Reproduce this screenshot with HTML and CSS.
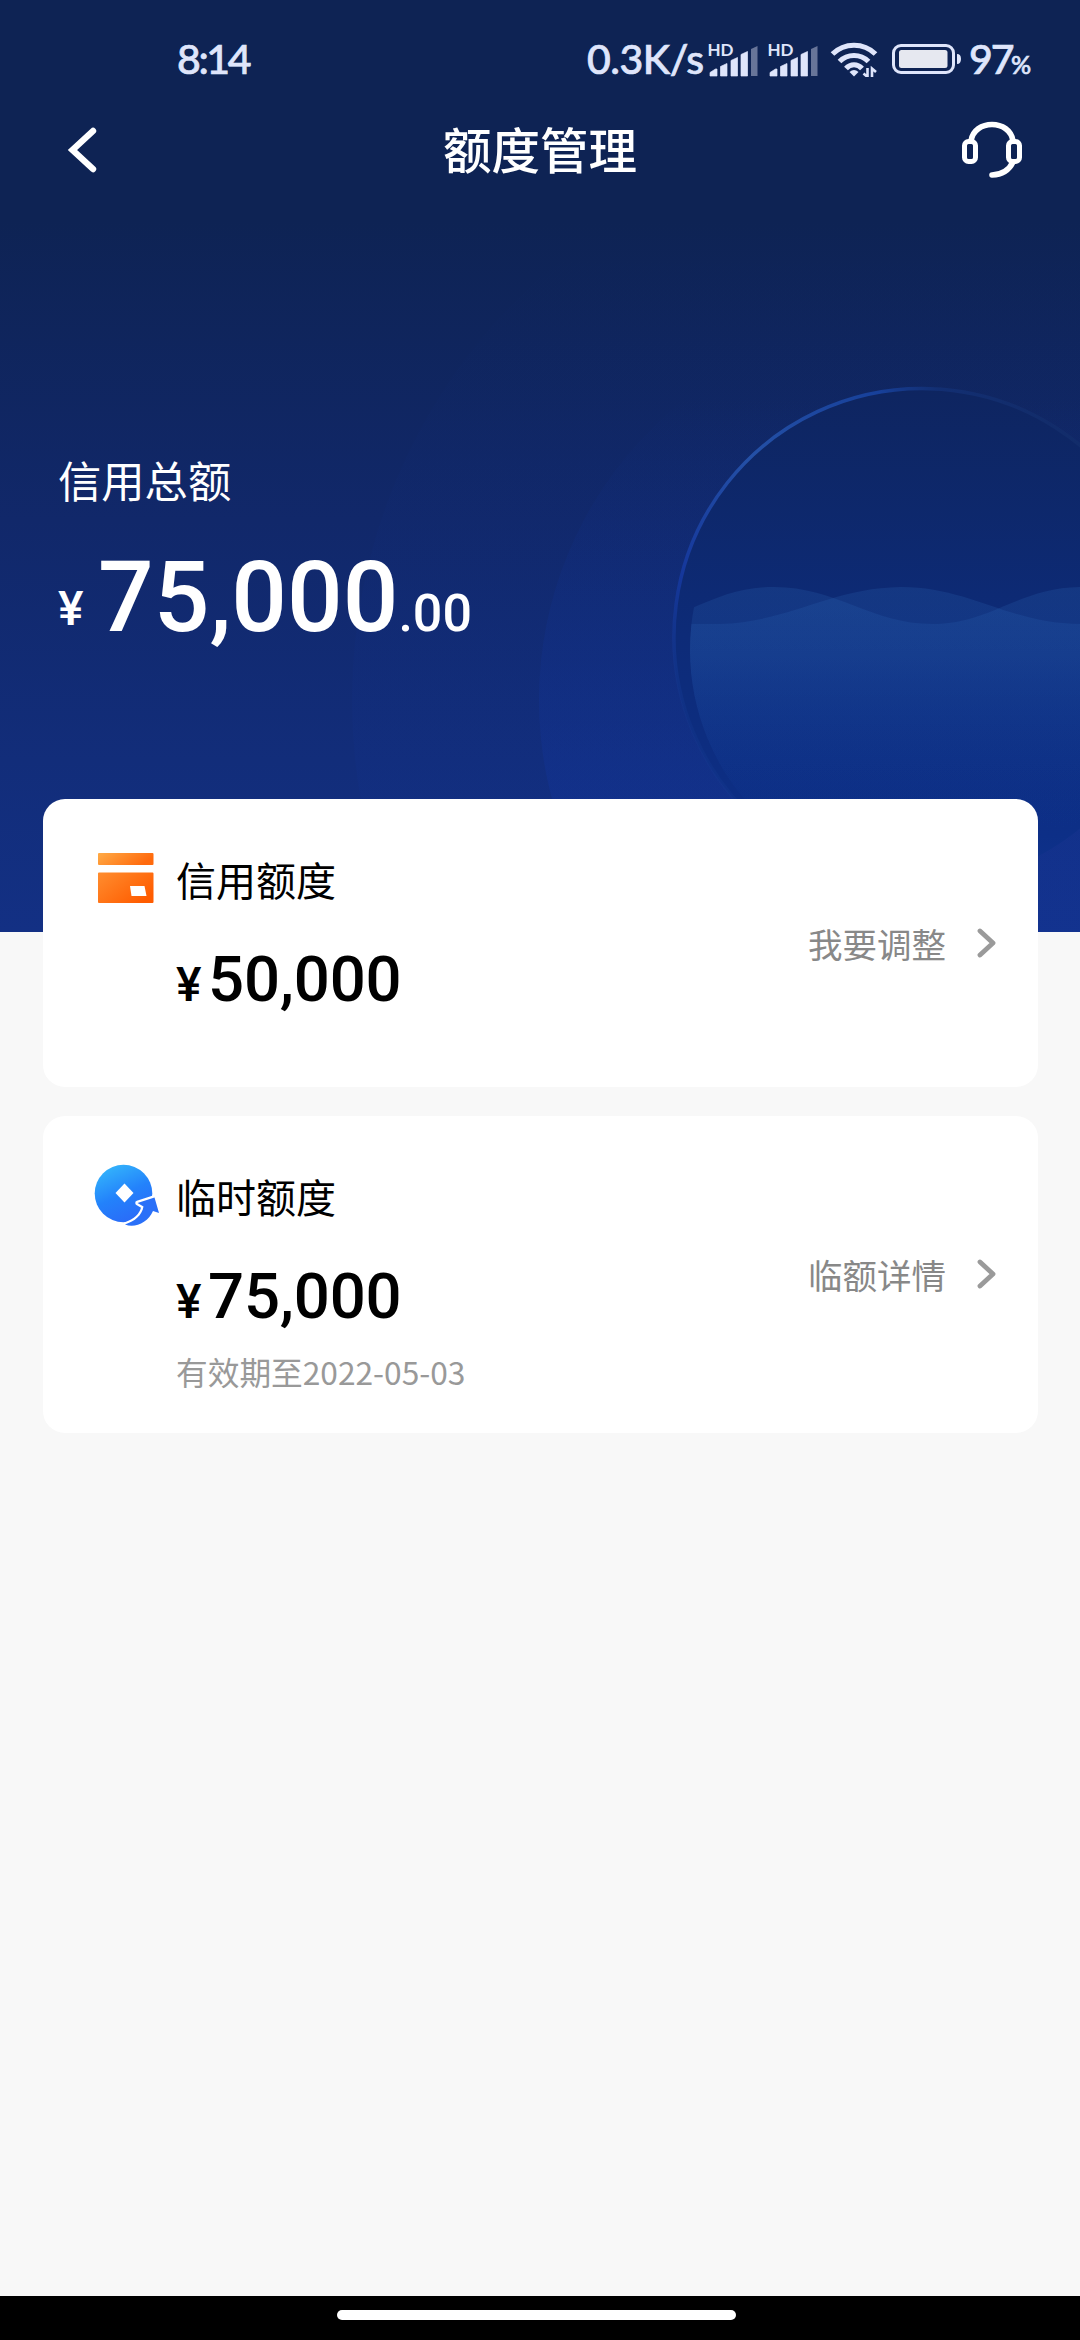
FILE: index.html
```html
<!DOCTYPE html>
<html lang="zh-CN">
<head>
<meta charset="utf-8">
<title>额度管理</title>
<link rel="stylesheet" href="styles.css">
</head>
<body>
<div class="screen">
  <header class="hero">
    <svg class="hero-art" width="1080" height="932" viewBox="0 0 1080 932">
      <defs>
        <linearGradient id="halo" x1="0" y1="0" x2="0" y2="1">
          <stop offset="0.1" stop-color="#1238a8" stop-opacity="0"/>
          <stop offset="0.6" stop-color="#1238a8" stop-opacity="0.24"/>
        </linearGradient>
        <linearGradient id="orb" x1="0" y1="0" x2="0" y2="1">
          <stop offset="0" stop-color="#0e2560"/>
          <stop offset="0.5" stop-color="#0d2b78"/>
          <stop offset="0.9" stop-color="#0d2f87"/>
          <stop offset="1" stop-color="#0f338c"/>
        </linearGradient>
        <linearGradient id="rim" gradientUnits="userSpaceOnUse" x1="673" y1="700" x2="1040" y2="400">
          <stop offset="0" stop-color="#153a92" stop-opacity="0.3"/>
          <stop offset="0.18" stop-color="#15379b"/>
          <stop offset="0.45" stop-color="#2450a6"/>
          <stop offset="0.75" stop-color="#17409a"/>
          <stop offset="0.85" stop-color="#15357e" stop-opacity="0.6"/>
          <stop offset="1" stop-color="#15306e" stop-opacity="0.6"/>
        </linearGradient>
        <linearGradient id="water" gradientUnits="userSpaceOnUse" x1="0" y1="587" x2="0" y2="830">
          <stop offset="0" stop-color="#2c66b4" stop-opacity="0.23"/>
          <stop offset="0.25" stop-color="#2860b4" stop-opacity="0.2"/>
          <stop offset="1" stop-color="#103ca4" stop-opacity="0"/>
        </linearGradient>
        <clipPath id="bowl"><circle cx="922" cy="650" r="232"/></clipPath>
      </defs>
      <circle cx="922" cy="700" r="570" fill="url(#halo)" opacity="0.35"/>
      <circle cx="922" cy="700" r="383" fill="url(#halo)"/>
      <circle cx="922" cy="636" r="249" fill="url(#orb)"/>
      <path d="M762 826A248 248 0 1 1 1170 636" fill="none" stroke="url(#rim)" stroke-width="3.500"/>
      <g clip-path="url(#bowl)">
        <path d="M690 624H720C790 622 830 588 901 587C970 587 1010 624 1080 624V932H690Z" fill="url(#water)"/>
        <path d="M690 609C720 596 742 587 774 587C836 587 872 624 932 624C990 624 1018 588 1080 587V932H690Z" fill="url(#water)"/>
      </g>
    </svg>

    <div class="status">
      <span class="time">8:14</span>
      <span class="speed">0.3K/s</span>
      <svg class="signal" width="60" height="36" viewBox="0 0 60 36">
        <path d="M2 35L2 31.500L7.500 28H9V35ZM12.500 35V25.500L19 22.500V35ZM23 35V19.500L29.500 16.500V35ZM33 35V13.500L39.500 10.500V35Z" fill="#dfe5fb" stroke="#dfe5fb" stroke-width="0.700" stroke-linejoin="round"/>
        <path d="M43 35V8L49.500 5V35Z" fill="#687599"/>
        <text class="hd" x="-0.500" y="15">HD</text>
      </svg>
      <svg class="signal" width="60" height="36" viewBox="0 0 60 36">
        <path d="M2 35L2 31.500L7.500 28H9V35ZM12.500 35V25.500L19 22.500V35ZM23 35V19.500L29.500 16.500V35ZM33 35V13.500L39.500 10.500V35Z" fill="#dfe5fb" stroke="#dfe5fb" stroke-width="0.700" stroke-linejoin="round"/>
        <path d="M43 35V8L49.500 5V35Z" fill="#687599"/>
        <text class="hd" x="-0.500" y="15">HD</text>
      </svg>
      <svg class="wifi" width="48" height="36" viewBox="0 0 48 36">
        <g fill="none" stroke="#dfe5fb" stroke-width="5.200">
          <path d="M2.500 13C14.500 1.300 33.500 1.300 45.500 13"/>
          <path d="M9.500 20.500C17.500 12.500 30.500 12.500 38.500 20.500"/>
          <path d="M16 27.500C20.500 22.500 27.500 22.500 32 27.500"/>
        </g>
        <path d="M19.500 31Q24 27 28.500 31L24 35.500Z" fill="#dfe5fb"/>
        <path d="M37.500 27V36L33.500 32.500M42 36V27.500L46 31" fill="none" stroke="#dfe5fb" stroke-width="2.600"/>
      </svg>
      <svg class="battery" width="72" height="32" viewBox="0 0 72 32">
        <rect x="2.500" y="2.500" width="60" height="27" rx="7.500" fill="none" stroke="#dfe5fb" stroke-width="3"/>
        <rect x="8" y="7" width="48.500" height="18" rx="2.500" fill="#e6e8f0"/>
        <path d="M66 11q4 0 4 5t-4 5Z" fill="#dfe5fb"/>
      </svg>
      <span class="level">97</span><span class="percent">%</span>
    </div>

    <nav class="nav">
      <svg width="64" height="48" viewBox="0 0 64 48"><path d="M29 5L8.500 24L29 43" fill="none" stroke="#fff" stroke-width="6.400" stroke-linecap="round" stroke-linejoin="miter"/></svg>
      <h1 class="nav-title">额度管理</h1>
      <svg width="64" height="60" viewBox="0 0 64 60">
        <g fill="none" stroke="#fff" stroke-width="5" stroke-linecap="round">
          <rect x="4.500" y="21.500" width="11" height="20" rx="4"/>
          <rect x="48.500" y="21.500" width="11" height="20" rx="4"/>
          <path d="M11 21C14 -1 50 -1 53 21M53 42Q47 54.500 32 55" stroke-width="5.600"/>
        </g>
      </svg>
    </nav>

    <section class="total">
      <div class="total-label">信用总额</div>
      <div class="total-value"><span class="total-yen">¥</span><span class="total-int">75,000</span><span class="total-dec">.00</span></div>
    </section>
  </header>

  <main class="cards">
    <article class="card">
      <svg class="card-icon" width="66" height="66" viewBox="0 0 66 66">
        <defs>
          <linearGradient id="orangeTop" x1="0" y1="0" x2="1" y2="0.300"><stop stop-color="#ffab46"/><stop offset="1" stop-color="#ff6a0d"/></linearGradient>
          <linearGradient id="orange" x1="0" y1="0" x2="1" y2="0.700"><stop stop-color="#ff8d2f"/><stop offset="1" stop-color="#ff5c00"/></linearGradient>
        </defs>
        <rect x="5" y="9" width="55.500" height="12" rx="1" fill="url(#orangeTop)"/>
        <path d="M6 28.500H59.500Q60.500 28.500 60.500 29.500V58Q60.500 59 59.500 59H6Q5 59 5 58V29.500Q5 28.500 6 28.500ZM37 42L38.500 52H53.500L51.500 42Z" fill="url(#orange)" fill-rule="evenodd"/>
      </svg>
      <div class="card-body">
        <h2 class="card-title">信用额度</h2>
        <div class="amount"><span class="yen">¥</span><span class="num">50,000</span></div>
      </div>
      <a class="card-link">我要调整<svg class="chevron" width="20" height="32" viewBox="0 0 20 32"><path d="M3 4L16 16L3 28" fill="none" stroke="#9a9a9a" stroke-width="4.800" stroke-linecap="round" stroke-linejoin="round"/></svg></a>
    </article>

    <article class="card card-temp">
      <svg class="card-icon" width="68" height="68" viewBox="0 0 68 68">
        <defs>
          <linearGradient id="blue" x1="0.150" y1="0" x2="0.600" y2="1"><stop stop-color="#35b9fb"/><stop offset="0.550" stop-color="#2382fb"/><stop offset="1" stop-color="#2a6bf8"/></linearGradient>
        </defs>
        <circle cx="31.500" cy="32.500" r="28.800" fill="url(#blue)"/>
        <path fill="#fff" d="M32.500 22.500L41.500 32L32.500 41.500L23.500 32Z"/>
        <path fill="#2a70f8" stroke="#fff" stroke-width="4.500" paint-order="stroke" stroke-linejoin="round" d="M62.500 36.500L45.500 42L51.500 45.500C50 54.500 43 60 33 63.500C43 67.500 56 61.500 61 50L67 52Z"/>
      </svg>
      <div class="card-body">
        <h2 class="card-title">临时额度</h2>
        <div class="amount"><span class="yen">¥</span><span class="num">75,000</span></div>
        <p class="note">有效期至2022-05-03</p>
      </div>
      <a class="card-link">临额详情<svg class="chevron" width="20" height="32" viewBox="0 0 20 32"><path d="M3 4L16 16L3 28" fill="none" stroke="#9a9a9a" stroke-width="4.800" stroke-linecap="round" stroke-linejoin="round"/></svg></a>
    </article>
  </main>

  <footer class="home"><div class="home-pill"></div></footer>
</div>
</body>
</html>
```

FILE: styles.css
```css
* { box-sizing: border-box; margin: 0; padding: 0; }

body {
  background: #f8f8f8;
  font-family: "Noto Sans CJK SC", sans-serif;
}

.screen {
  width: 1080px;
  height: 2340px;
  display: flex;
  flex-direction: column;
  overflow: hidden;
}

.hero {
  position: relative;
  height: 932px;
  flex: none;
  color: #fff;
  background: linear-gradient(#0e2354 0, #0e2354 220px, #11286a 520px, #122d7a 760px, #133084 932px);
}

.hero-art { position: absolute; left: 0; top: 0; }

.status, .nav, .total { position: relative; }

.status {
  display: flex;
  align-items: center;
  height: 118px;
  padding-left: 177px;
  color: #dfe5fb;
  font-family: Lato, sans-serif;
  font-weight: 500;
  font-size: 41px;
  line-height: 48px;
  -webkit-text-stroke: 0.7px #dfe5fb;
}

.status > * { flex: none; }
.time { width: 410px; letter-spacing: -2.4px; }
.speed { width: 121px; letter-spacing: -0.5px; }
.signal { overflow: visible; }
.hd { font: 700 17px Lato, sans-serif; fill: #dfe5fb; -webkit-text-stroke: 0; }
.wifi { margin-left: 2px; }
.battery { margin-left: 13px; }
.level { margin-left: 6px; width: 42px; letter-spacing: -2px; }
.percent { font-size: 25px; padding-top: 9px; }

.nav {
  display: flex;
  align-items: center;
  justify-content: space-between;
  height: 64px;
  padding: 0 56px 0 64px;
}

.nav-title { font-size: 48.500px; font-weight: 500; line-height: 70px; padding: 0 8px 4px 0; }

.total { padding: 267px 0 0 58px; }
.total-label { font-size: 43.3px; line-height: 60px; }

.total-value {
  display: flex;
  align-items: baseline;
  font-family: Roboto, sans-serif;
  font-weight: 500;
  line-height: 110px;
  margin-top: 34px;
}

.total-yen { font-size: 48px; width: 40px; position: relative; top: -6px; }
.total-int { font-size: 98px; }
.total-dec { font-size: 52px; }

.cards {
  position: relative;
  flex: 1;
  display: flex;
  flex-direction: column;
  gap: 29px;
  margin-top: -133px;
  padding: 0 42px 0 43px;
}

.card {
  display: flex;
  height: 288px;
  padding: 45px 41px 0 49px;
  background: #fff;
  border-radius: 22px;
}

.card-temp { height: 317px; }
.card-icon { flex: none; width: 68px; overflow: visible; }
.card-body { flex: 1; padding-left: 16px; }
.card-title { font-size: 40px; font-weight: 400; line-height: 70px; color: #000; }

.amount {
  display: flex;
  align-items: baseline;
  font-family: Roboto, sans-serif;
  font-weight: 500;
  line-height: 74px;
  margin-top: 29px;
  color: #000;
}

.yen { font-size: 48px; width: 32px; }
.num { font-size: 63.5px; letter-spacing: -0.2px; }

.note { font-size: 31.7px; line-height: 46px; margin-top: 9px; color: #999; }

.card-link {
  display: flex;
  align-items: center;
  align-self: center;
  margin-top: -45px;
  font-size: 34.500px;
  line-height: 48px;
  padding-bottom: 1px;
  color: #888;
}

.chevron { margin-left: 31px; }

.home {
  flex: none;
  height: 44px;
  padding-top: 14px;
  background: #000;
}

.home-pill { width: 399px; height: 10px; margin-left: 337px; border-radius: 5px; background: #fff; }
```
